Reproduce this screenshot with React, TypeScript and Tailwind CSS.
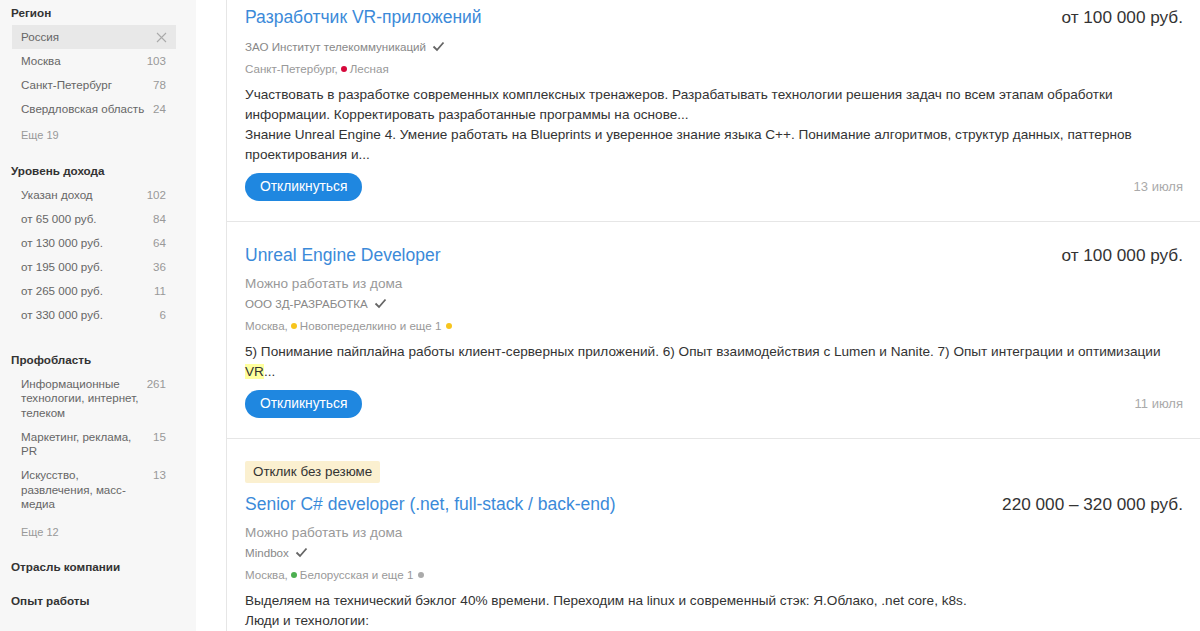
import React from "react";

type Item = { label: string; count?: string; selected?: boolean };

const Check = () => (
  <svg width="13" height="11" viewBox="0 0 13 11" className="inline-block ml-[6px] -mt-[3px]">
    <polyline points="1.5,5.5 5,9 11.5,1.5" fill="none" stroke="#666" strokeWidth="1.8" />
  </svg>
);

const Dot = ({ color, className }: { color: string; className?: string }) => (
  <span
    className={"inline-block w-[6px] h-[6px] rounded-full mr-[3px] align-middle -mt-[2px] " + (className || "ml-[3px]")}
    style={{ background: color }}
  />
);

function FilterItem({ item, wrap }: { item: Item; wrap?: boolean }) {
  return (
    <div
      className={
        "ml-[12px] mr-[20px] pl-[9px] pr-[10px] py-[4.75px] flex items-start justify-between text-[11.6px] leading-[14.5px] " +
        (item.selected ? "bg-[#e8e8e8]" : "")
      }
    >
      <span className={"text-[#666] " + (wrap ? "w-[124px]" : "whitespace-nowrap")}>{item.label}</span>
      {item.selected ? (
        <svg width="11" height="11" viewBox="0 0 11 11" className="mt-[2px] mr-[-1px]">
          <path d="M1 1L10 10M10 1L1 10" stroke="#aaa" strokeWidth="1.1" />
        </svg>
      ) : (
        <span className="text-[#999] text-right">{item.count}</span>
      )}
    </div>
  );
}

function Heading({ children, className }: { children: React.ReactNode; className?: string }) {
  return <div className={"pl-[11px] text-[11.7px] leading-[18px] font-bold text-[#333] " + (className || "")}>{children}</div>;
}

function More({ children, className }: { children: React.ReactNode; className?: string }) {
  return <div className={"pl-[21px] text-[11px] leading-[18px] text-[#999] " + (className || "")}>{children}</div>;
}

function Sidebar() {
  const region: Item[] = [
    { label: "Россия", selected: true },
    { label: "Москва", count: "103" },
    { label: "Санкт-Петербург", count: "78" },
    { label: "Свердловская область", count: "24" },
  ];
  const income: Item[] = [
    { label: "Указан доход", count: "102" },
    { label: "от 65 000 руб.", count: "84" },
    { label: "от 130 000 руб.", count: "64" },
    { label: "от 195 000 руб.", count: "36" },
    { label: "от 265 000 руб.", count: "11" },
    { label: "от 330 000 руб.", count: "6" },
  ];
  const prof: Item[] = [
    { label: "Информационные технологии, интернет, телеком", count: "261" },
    { label: "Маркетинг, реклама, PR", count: "15" },
    { label: "Искусство, развлечения, масс-медиа", count: "13" },
  ];
  return (
    <aside className="w-[196px] shrink-0 bg-[#f7f7f7] min-h-[631px] pt-[4px]">
      <Heading className="mb-[3px]">Регион</Heading>
      {region.map((i) => (
        <FilterItem key={i.label} item={i} />
      ))}
      <More className="mt-[5px]">Еще 19</More>
      <Heading className="mt-[18px] mb-[3px]">Уровень дохода</Heading>
      {income.map((i) => (
        <FilterItem key={i.label} item={i} />
      ))}
      <Heading className="mt-[24px] mb-[3px]">Профобласть</Heading>
      {prof.map((i) => (
        <FilterItem key={i.label} item={i} wrap />
      ))}
      <More className="mt-[6px]">Еще 12</More>
      <Heading className="mt-[17px]">Отрасль компании</Heading>
      <Heading className="mt-[16px]">Опыт работы</Heading>
    </aside>
  );
}

type Vacancy = {
  badge?: string;
  title: string;
  salary: string;
  remote?: boolean;
  company: string;
  city: string;
  metro: { name: string; color: string; more?: string; moreColor?: string };
  desc: React.ReactNode;
  date?: string;
  pt: string;
};

function Card({ v }: { v: Vacancy }) {
  return (
    <div className={"border-l border-b border-[#e6e6e6] pl-[18px] pr-[17px] pb-[20px] " + v.pt}>
      {v.badge && (
        <div className="inline-block bg-[#fbf0d0] text-[#333] text-[13.4px] leading-[22px] px-[8px] rounded-[2px] mb-[9px]">
          {v.badge}
        </div>
      )}
      <div className="flex justify-between items-start text-[17.5px] leading-[24px]">
        <span className="text-[#3b8ad9]">{v.title}</span>
        <span className="text-[#333] text-[17.2px]">{v.salary}</span>
      </div>
      {v.remote ? (
        <div className="mt-[7px] text-[13.6px] leading-[20px] text-[#999]">Можно работать из дома</div>
      ) : null}
      <div className={"text-[11.6px] leading-[18px] text-[#888] " + (v.remote ? "mt-[1px]" : "mt-[9px]")}>
        {v.company}
        <Check />
      </div>
      <div className="mt-[4px] text-[11.6px] leading-[18px] text-[#999]">
        {v.city},
        <Dot color={v.metro.color} />
        {v.metro.name}
        {v.metro.more && (
          <>
            {" "}
            {v.metro.more}
            <Dot color={v.metro.moreColor || "#aaa"} className="ml-[5px]" />
          </>
        )}
      </div>
      <div className="mt-[7px] text-[13.6px] leading-[20px] text-[#333]">{v.desc}</div>
      {v.date && (
        <div className="mt-[8px] flex items-center justify-between">
          <button className="h-[28px] px-[15px] rounded-full bg-[#1f87e0] text-white text-[13.8px] leading-[28px]">
            Откликнуться
          </button>
          <span className="text-[13px] text-[#aaa]">{v.date}</span>
        </div>
      )}
    </div>
  );
}

const vacancies: Vacancy[] = [
  {
    title: "Разработчик VR-приложений",
    salary: "от 100 000 руб.",
    company: "ЗАО Институт телекоммуникаций",
    city: "Санкт-Петербург",
    metro: { name: "Лесная", color: "#d6083b" },
    desc: (
      <>
        Участвовать в разработке современных комплексных тренажеров. Разрабатывать технологии решения задач по всем этапам обработки
        информации. Корректировать разработанные программы на основе...
        <br />
        Знание Unreal Engine 4. Умение работать на Blueprints и уверенное знание языка С++. Понимание алгоритмов, структур данных, паттернов
        проектирования и...
      </>
    ),
    date: "13 июля",
    pt: "pt-[5px]",
  },
  {
    title: "Unreal Engine Developer",
    salary: "от 100 000 руб.",
    remote: true,
    company: "ООО 3Д-РАЗРАБОТКА",
    city: "Москва",
    metro: { name: "Новопеределкино", color: "#f7c51d", more: "и еще 1", moreColor: "#f7c51d" },
    desc: (
      <>
        5) Понимание пайплайна работы клиент-серверных приложений. 6) Опыт взаимодействия с Lumen и Nanite. 7) Опыт интеграции и оптимизации{" "}
        <span className="bg-[#ffff9e]">VR</span>...
      </>
    ),
    date: "11 июля",
    pt: "pt-[21px]",
  },
  {
    badge: "Отклик без резюме",
    title: "Senior C# developer (.net, full-stack / back-end)",
    salary: "220 000 – 320 000 руб.",
    remote: true,
    company: "Mindbox",
    city: "Москва",
    metro: { name: "Белорусская", color: "#4caf50", more: "и еще 1", moreColor: "#aaa" },
    desc: (
      <>
        Выделяем на технический бэклог 40% времени. Переходим на linux и современный стэк: Я.Облако, .net core, k8s.
        <br />
        Люди и технологии:
      </>
    ),
    pt: "pt-[20px]",
  },
];

export default function App() {
  return (
    <div className="w-[1200px] h-[631px] overflow-hidden flex bg-white font-['Liberation_Sans',Arial,sans-serif]">
      <Sidebar />
      <main className="flex-1 pl-[30px] min-w-0">
        {vacancies.map((v) => (
          <Card key={v.title} v={v} />
        ))}
      </main>
    </div>
  );
}
